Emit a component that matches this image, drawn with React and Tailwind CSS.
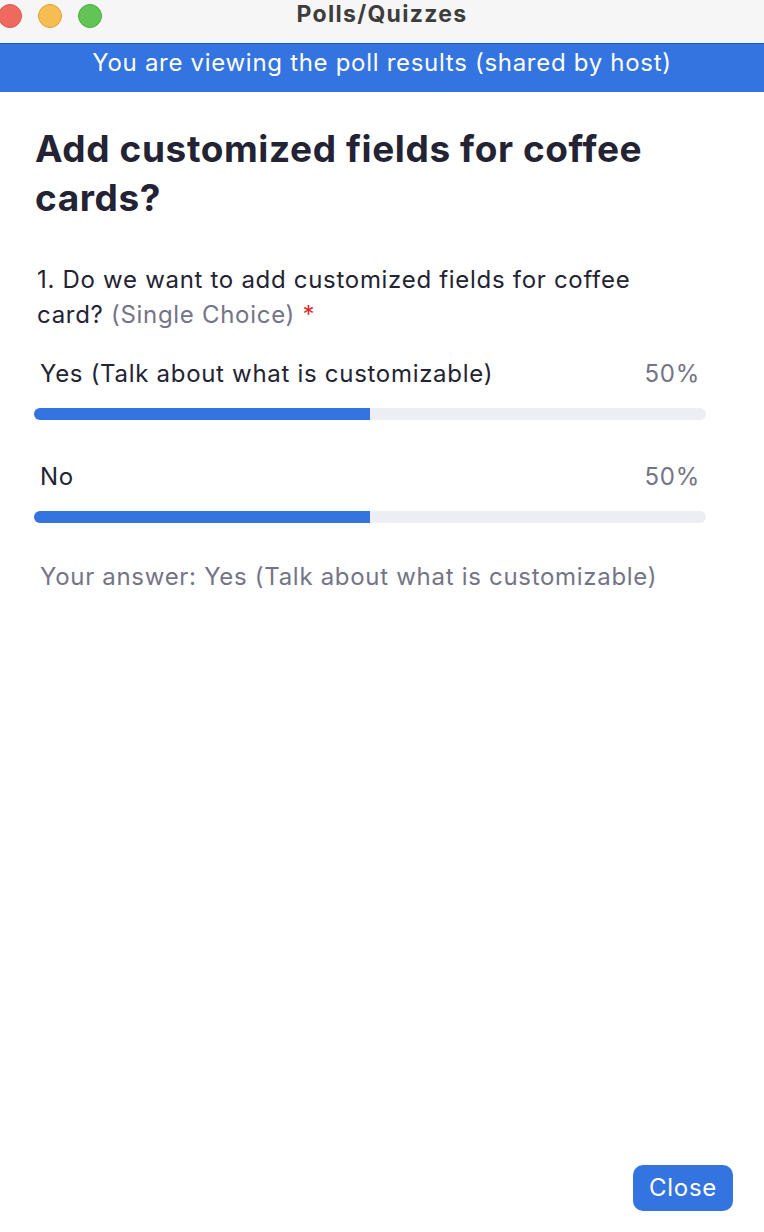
export default function App() {
  const options = [
    { label: "Yes (Talk about what is customizable)", pct: 50 },
    { label: "No", pct: 50 },
  ];
  return (
    <div
      className="w-[764px] h-[1232px] bg-white flex flex-col overflow-hidden text-[#232333]"
      style={{ fontFamily: "Inter, 'Noto Sans', sans-serif" }}
    >
      {/* Title bar */}
      <div className="relative h-[43px] bg-[#f6f6f6] flex items-center justify-center shrink-0">
        <div className="absolute left-[-2px] top-[4px] flex gap-[16px]">
          <span className="w-[24px] h-[24px] rounded-full bg-[#ee6a5f] border border-[#d65a50]" />
          <span className="w-[24px] h-[24px] rounded-full bg-[#f6be50] border border-[#dea43c]" />
          <span className="w-[24px] h-[24px] rounded-full bg-[#61c454] border border-[#4fad43]" />
        </div>
        <span className="text-[23px] font-bold tracking-[1.3px] text-[#3d3d3d] leading-none mt-[-14px]">Polls/Quizzes</span>
      </div>
      {/* Banner */}
      <div className="h-[49px] bg-[#3474e0] border-t border-[#1d59cf] flex items-center justify-center shrink-0">
        <span className="text-[24px] tracking-[0.7px] text-white leading-none mt-[-10px]">
          You are viewing the poll results (shared by host)
        </span>
      </div>

      <div className="flex-1 flex flex-col pl-[34px] pr-[58px]">
        <h1 className="mt-[32px] text-[37px] leading-[49px] font-bold tracking-[0.6px] text-[#232333] pl-[1px] pr-[20px]">
          Add customized fields for coffee cards?
        </h1>
        <p className="mt-[40px] text-[24px] tracking-[0.7px] leading-[35px] pl-[3px] pr-[40px]">
          1. Do we want to add customized fields for coffee card?{" "}
          <span className="text-[#747487]">(Single Choice)</span>{" "}
          <span className="text-[#e02828]">*</span>
        </p>

        <div className="mt-[27px] flex flex-col">
          {options.map((o, i) => (
            <div key={i} className={i > 0 ? "mt-[42px]" : ""}>
              <div className="flex justify-between pl-[6px] pr-[6px] text-[24px] tracking-[0.7px] leading-[30px]">
                <span>{o.label}</span>
                <span className="text-[#747487]">{o.pct}%</span>
              </div>
              <div className="mt-[19px] h-[12px] rounded-full bg-[#ededf4] overflow-hidden">
                <div className="h-full bg-[#3474e0]" style={{ width: `${o.pct}%` }} />
              </div>
            </div>
          ))}
        </div>

        <p className="mt-[39px] pl-[6px] text-[24px] tracking-[0.7px] leading-[30px] text-[#747487]">
          Your answer: Yes (Talk about what is customizable)
        </p>

        <div className="mt-auto mb-[21px] flex justify-end">
          <button className="w-[100px] h-[46px] rounded-[10px] bg-[#3474e0] text-white text-[24px] tracking-[0.7px] mr-[-27px]">
            Close
          </button>
        </div>
      </div>
    </div>
  );
}
